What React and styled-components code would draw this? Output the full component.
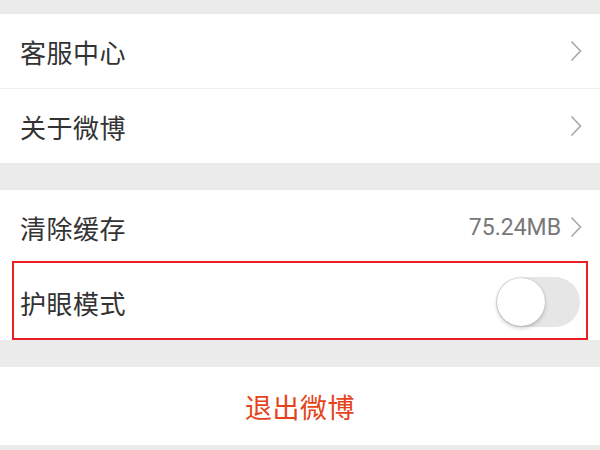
import React, { useState } from "react";
import styled, { createGlobalStyle } from "styled-components";

const GlobalStyle = createGlobalStyle`
  html, body {
    margin: 0;
    padding: 0;
    background: #ebebeb;
  }
  body {
    font-family: "Noto Sans CJK SC", "Noto Sans", sans-serif;
  }
`;

export default function App() {
  const [eyeMode, setEyeMode] = useState(false);

  return (
    <Page>
      <GlobalStyle />
      <Group>
        <Row>
          <Label>客服中心</Label>
          <Chevron />
        </Row>
        <Divider />
        <Row>
          <Label>关于微博</Label>
          <Chevron />
        </Row>
      </Group>
      <Group>
        <Row>
          <Label>清除缓存</Label>
          <Right>
            <Value>75.24MB</Value>
            <Chevron />
          </Right>
        </Row>
        <Row $highlight>
          <Label>护眼模式</Label>
          <Toggle $on={eyeMode} onClick={() => setEyeMode(!eyeMode)}>
            <Knob $on={eyeMode} />
          </Toggle>
        </Row>
      </Group>
      <Group>
        <Logout>退出微博</Logout>
      </Group>
    </Page>
  );
}

function Chevron() {
  return (
    <ChevronSvg width="12" height="22" viewBox="0 0 12 22">
      <path d="M1.5 1.5 L10.5 11 L1.5 20.5" fill="none" stroke="#a8a8a8" strokeWidth="1.6" />
    </ChevronSvg>
  );
}

const Page = styled.div`
  width: 600px;
  height: 450px;
  overflow: hidden;
  padding-top: 14px;
  box-sizing: border-box;
  display: flex;
  flex-direction: column;
  gap: 27px;
`;
const Group = styled.div`
  background: #fff;
  display: flex;
  flex-direction: column;
`;
const Row = styled.div`
  position: relative;
  height: ${(p) => (p.$highlight ? "76px" : "74px")};
  display: flex;
  align-items: center;
  justify-content: space-between;
  padding: 0 18px 0 20px;

  &::after {
    content: "";
    display: ${(p) => (p.$highlight ? "block" : "none")};
    position: absolute;
    top: -3px;
    bottom: 0;
    left: 12px;
    right: 12px;
    border: 2px solid #ee1c24;
    pointer-events: none;
  }
`;
const Divider = styled.div`
  height: 1px;
  background: #efefef;
`;
const Label = styled.span`
  font-size: 26px;
  color: #333;
  letter-spacing: 0.5px;
`;
const Right = styled.div`
  display: flex;
  align-items: center;
  gap: 9px;
`;
const Value = styled.span`
  font-family: "Roboto", "Noto Sans", sans-serif;
  font-size: 23px;
  color: #777;
`;
const ChevronSvg = styled.svg`
  display: block;
`;
const Toggle = styled.div`
  position: relative;
  width: 84px;
  height: 50px;
  border-radius: 25px;
  background: ${(p) => (p.$on ? "#ff8200" : "#e6e6e6")};
  margin-right: 2px;
  cursor: pointer;
`;
const Knob = styled.div`
  position: absolute;
  top: 1px;
  left: ${(p) => (p.$on ? "35px" : "1px")};
  width: 48px;
  height: 48px;
  border-radius: 50%;
  background: #fff;
  box-shadow: 0 2px 4px rgba(0, 0, 0, 0.22), 0 0 1px rgba(0, 0, 0, 0.2);
`;
const Logout = styled.div`
  height: 78px;
  display: flex;
  align-items: center;
  justify-content: center;
  font-size: 27px;
  color: #e5441b;
  letter-spacing: 0.5px;
`;
